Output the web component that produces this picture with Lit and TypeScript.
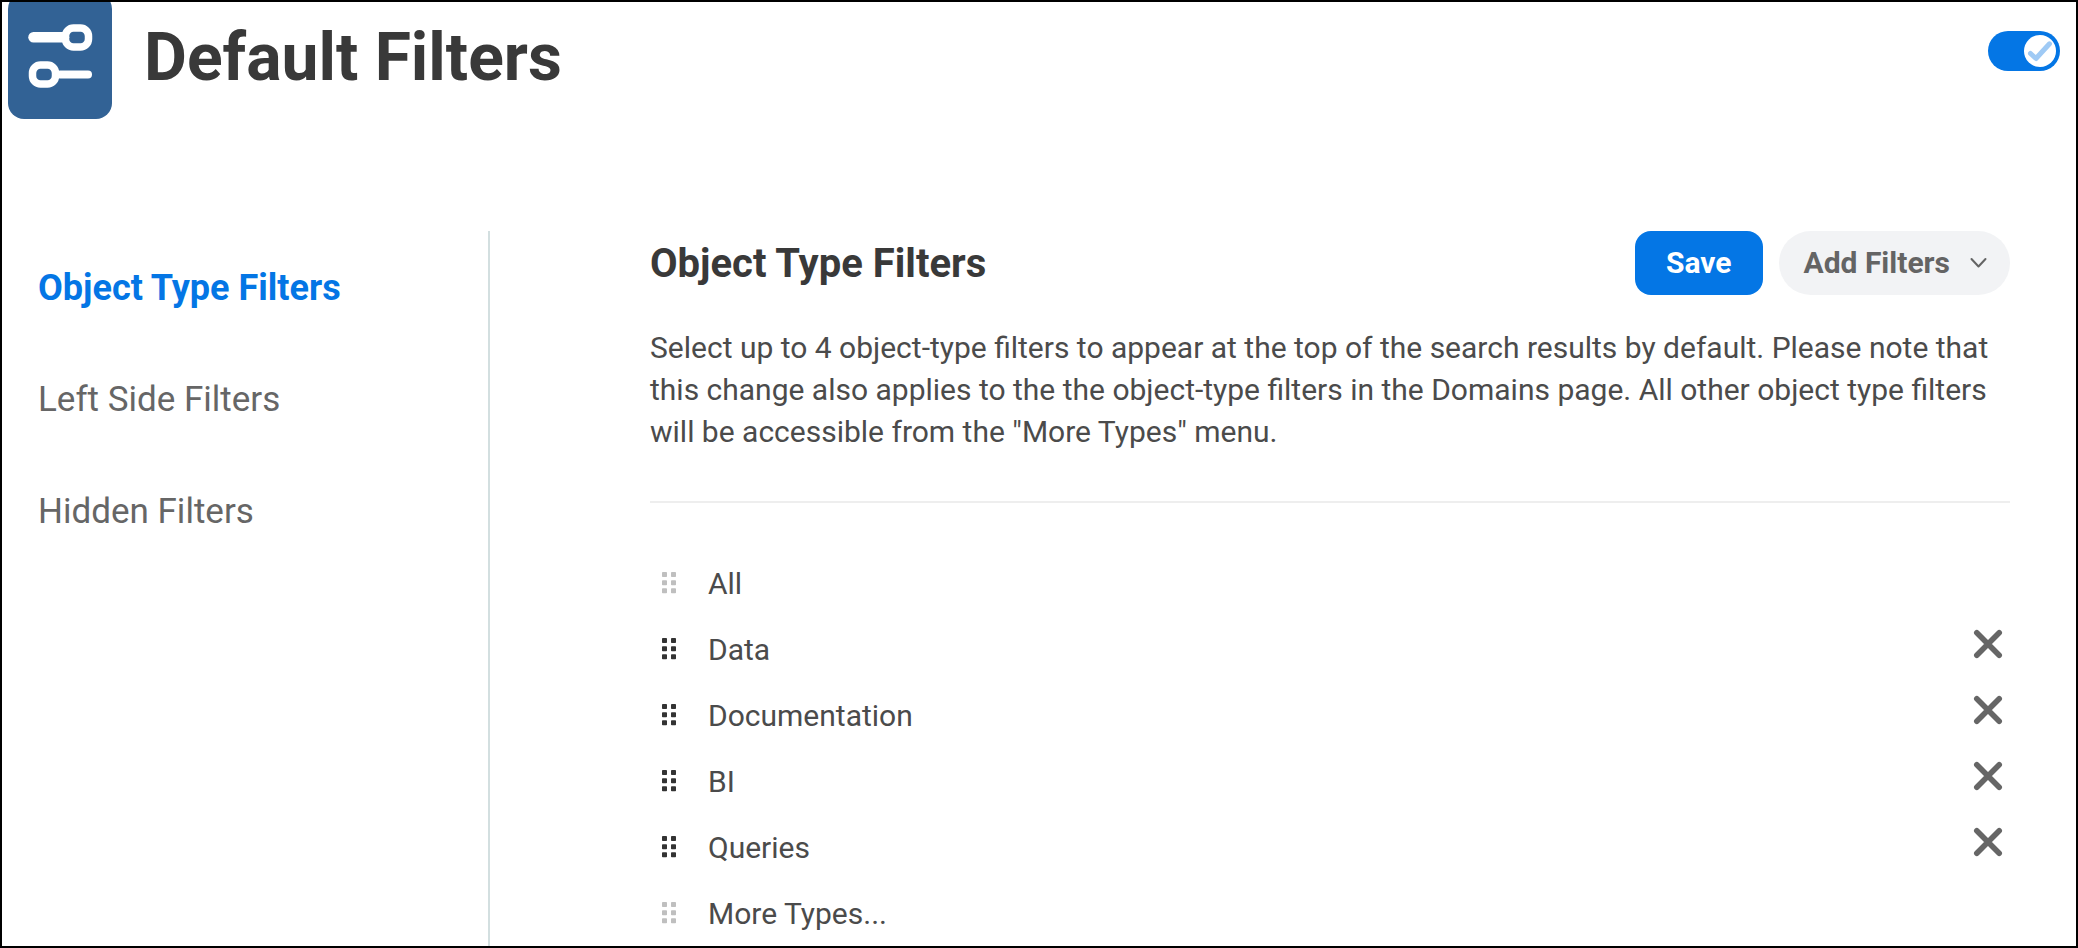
import { LitElement, html, css, svg, nothing } from "lit";
import { customElement, state } from "lit/decorators.js";
import { classMap } from "lit/directives/class-map.js";

interface FilterItem {
  name: string;
  fixed: boolean;
}

const SECTIONS = ["Object Type Filters", "Left Side Filters", "Hidden Filters"];

@customElement("drag-handle")
class DragHandle extends LitElement {
  static styles = css`
    :host { display: block; width: 14px; height: 22px; }
    .dots { display: block; width: 14px; height: 22px; fill: currentColor; }
  `;

  render() {
    return html`<svg class="dots" viewBox="0 0 14 22" aria-hidden="true">
      ${[0, 8.2, 16.3].map((y) => [0, 9].map((x) => svg`<rect x=${x} y=${y} width="5" height="5" rx="0.8"></rect>`))}
    </svg>`;
  }
}

@customElement("toggle-switch")
class ToggleSwitch extends LitElement {
  static styles = css`
    :host { display: block; }
    .switch { display: grid; width: 72px; height: 40px; cursor: pointer; }
    .input { grid-area: 1 / 1; width: 72px; height: 40px; margin: 0; appearance: none; border-radius: 20px; background: #b8bec4; cursor: pointer; }
    .input:checked { background: #0476e5; }
    .knob { grid-area: 1 / 1; place-self: center start; margin: 0 4px; width: 32px; height: 32px; border-radius: 50%; background: #fff; z-index: 1; pointer-events: none; }
    .input:checked + .knob { place-self: center end; }
    .check { display: block; width: 32px; height: 32px; fill: none; stroke: #9fcaf5; stroke-width: 5; stroke-linecap: round; stroke-linejoin: round; }
  `;

  render() {
    return html`<label class="switch">
      <input class="input" type="checkbox" role="switch" aria-label="Default Filters enabled" checked />
      <span class="knob"><svg class="check" viewBox="0 0 32 32" aria-hidden="true"><path d="M6.5 18.5 L12 23.5 L25.5 8.8"></path></svg></span>
    </label>`;
  }
}

@customElement("app-root")
class AppRoot extends LitElement {
  static styles = css`
    :host { display: block; font-family: Roboto, sans-serif; color: #4b4b4b; }
    * { box-sizing: border-box; }
    .page { display: flex; flex-direction: column; min-height: 100vh; border: 2px solid #000; background: #fff; }
    .header { display: flex; align-items: flex-start; overflow: hidden; padding: 0 16px 112px 6px; }
    .logo { display: block; flex: none; width: 104px; height: 117px; }
    .title { flex: 1; margin: 0 0 0 32px; padding-top: 18px; font-size: 66px; line-height: 76px; font-weight: 700; color: #393939; }
    .toggle { margin-top: 29px; }
    .body { display: flex; flex: 1; }
    .nav { flex: none; display: flex; flex-direction: column; gap: 72px; width: 488px; padding: 37px 36px; border-right: 2px solid #d3dfe0; }
    .link { font-size: 35px; line-height: 40px; color: #666; text-decoration: none; }
    .link.active { font-size: 36px; font-weight: 700; color: #0476e5; }
    .content { flex: 1; min-width: 0; padding: 0 66px 0 160px; }
    .bar { display: flex; align-items: center; gap: 16px; }
    .heading { flex: 1; margin: 0; padding-top: 2px; font-size: 40px; line-height: 60px; font-weight: 700; color: #393939; }
    .button { display: flex; align-items: center; height: 64px; border: 0; font: 700 30px/36px Roboto, sans-serif; cursor: pointer; }
    .save { padding: 0 31px; border-radius: 16px; background: #0476e5; color: #fff; }
    .add { gap: 20px; padding: 0 23px 0 25px; border-radius: 32px; background: #f2f3f5; color: #646464; }
    .chevron { display: block; width: 17px; height: 12px; fill: none; stroke: #646464; stroke-width: 2; stroke-linecap: round; stroke-linejoin: round; }
    .intro { margin: 0; padding: 32px 0 48px; border-bottom: 2px solid #eee; font-size: 30px; line-height: 42px; }
    .list { margin: 0; padding: 47px 6px 0 12px; list-style: none; }
    .row { display: flex; align-items: center; height: 66px; color: #333; }
    .row.fixed { color: #bfbfbf; }
    .name { flex: 1; margin-left: 32px; padding-top: 2px; font-size: 30px; line-height: 36px; color: #4b4b4b; }
    .remove { padding: 0 0 10px; border: 0; background: none; color: #666; cursor: pointer; }
    .cross { display: block; width: 32px; height: 32px; fill: none; stroke: currentColor; stroke-width: 5.6; stroke-linecap: round; }
  `;

  @state() section = SECTIONS[0];
  @state() items: FilterItem[] = [
    { name: "All", fixed: true },
    { name: "Data", fixed: false },
    { name: "Documentation", fixed: false },
    { name: "BI", fixed: false },
    { name: "Queries", fixed: false },
    { name: "More Types...", fixed: true },
  ];

  remove(item: FilterItem) {
    this.items = this.items.filter((i) => i !== item);
  }

  select(event: Event, name: string) {
    event.preventDefault();
    this.section = name;
  }

  renderRow(item: FilterItem) {
    return html`<li class=${classMap({ row: true, fixed: item.fixed })}>
      <drag-handle></drag-handle>
      <span class="name">${item.name}</span>
      ${item.fixed
        ? nothing
        : html`<button class="remove" type="button" aria-label="Remove ${item.name}" @click=${() => this.remove(item)}>
            <svg class="cross" viewBox="0 0 32 32" aria-hidden="true"><path d="M4.8 4.8 L27.2 27.2 M27.2 4.8 L4.8 27.2"></path></svg>
          </button>`}
    </li>`;
  }

  render() {
    return html`<div class="page">
      <header class="header">
        <svg class="logo" viewBox="0 2 104 117" aria-hidden="true">
          <rect x="0" y="-7" width="104" height="126" rx="16" fill="#326295"></rect>
          <g fill="none" stroke="#fff" stroke-linecap="round">
            <path d="M25.5 37.3 H56" stroke-width="10.5"></path>
            <rect x="57.5" y="28" width="23" height="19" rx="8" stroke-width="7.5"></rect>
            <path d="M52 74.5 H80" stroke-width="8"></path>
            <rect x="24.5" y="65" width="23" height="19" rx="8" stroke-width="7.5"></rect>
          </g>
        </svg>
        <h1 class="title">Default Filters</h1>
        <toggle-switch class="toggle"></toggle-switch>
      </header>
      <div class="body">
        <nav class="nav" aria-label="Filter settings">
          ${SECTIONS.map((name) => html`<a href="#" class=${classMap({ link: true, active: name === this.section })}
            @click=${(e: Event) => this.select(e, name)}>${name}</a>`)}
        </nav>
        <main class="content">
          <div class="bar">
            <h2 class="heading">Object Type Filters</h2>
            <button class="button save" type="button">Save</button>
            <button class="button add" type="button" aria-haspopup="menu">Add Filters
              <svg class="chevron" viewBox="0 0 17 12" aria-hidden="true"><path d="M1.5 2 L8.5 9.5 L15.5 2"></path></svg>
            </button>
          </div>
          <p class="intro">Select up to 4 object-type filters to appear at the top of the search results by default. Please note that this change also applies to the the object-type filters in the Domains page. All other object type filters will be accessible from the "More Types" menu.</p>
          <ul class="list">${this.items.map((item) => this.renderRow(item))}</ul>
        </main>
      </div>
    </div>`;
  }
}
